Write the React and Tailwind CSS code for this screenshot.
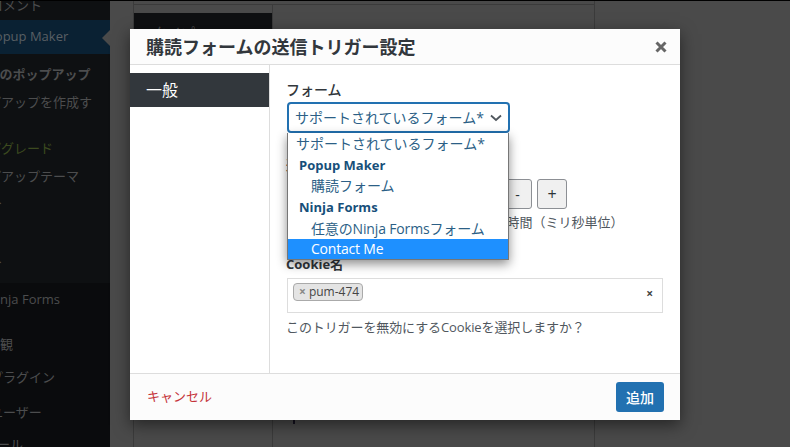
import React from "react";

function NavItem({ children, className = "", ml = "-ml-[38px]", h = "h-[28px]" }) {
  return (
    <div className={`${h} shrink-0 flex items-center whitespace-nowrap text-[13px] ${className}`}>
      <span className={ml}>{children}</span>
    </div>
  );
}

export default function App() {
  return (
    <div className="relative w-[790px] h-[447px] overflow-hidden bg-[#4a4a4a] font-['Open_Sans','Noto_Sans_CJK_JP',sans-serif] text-[#444444]">
      {/* page behind the overlay */}
      <div className="flex h-full">
        <aside className="w-[110px] h-full shrink-0 overflow-hidden bg-[#0e1012] text-[#4c4d4e] flex flex-col">
          <NavItem h="h-[20px]" ml="-ml-[10px] -mt-[8px]">コメント</NavItem>
          <div className="relative h-[34px] shrink-0 flex items-center bg-[#0a2133] whitespace-nowrap text-[13px] text-[#595f64]">
            <span className="-ml-[13px]">Popup Maker</span>
            <span className="absolute right-0 top-[10px] w-0 h-0 border-y-[8px] border-y-transparent border-r-[8px] border-r-[#4a4a4a]"></span>
          </div>
          <div className="h-[7px] shrink-0"></div>
          <NavItem className="font-bold">すべてのポップアップ</NavItem>
          <NavItem>ポップアップを作成す</NavItem>
          <div className="h-[18px] shrink-0"></div>
          <NavItem className="text-[#3c4a1f]">アップグレード</NavItem>
          <NavItem>ポップアップテーマ</NavItem>
          <NavItem h="h-[24px]" ml="-ml-[49px]">サポート</NavItem>
          <div className="h-[35px] shrink-0"></div>
          <NavItem h="h-[24px]" ml="-ml-[49px]">サポート</NavItem>
          <div className="h-[9px] shrink-0"></div>
          <div className="flex-1 bg-[#0a0b0d] flex flex-col">
            <div className="h-[3px] shrink-0"></div>
            <NavItem ml="-ml-[13px]">Ninja Forms</NavItem>
            <div className="h-[17px] shrink-0"></div>
            <NavItem ml="-ml-[13px]">外観</NavItem>
            <div className="h-[5px] shrink-0"></div>
            <NavItem ml="-ml-[10px]">プラグイン</NavItem>
            <div className="h-[7px] shrink-0"></div>
            <NavItem ml="-ml-[10px]">ユーザー</NavItem>
            <div className="h-[4px] shrink-0"></div>
            <NavItem ml="-ml-[16px]">ツール</NavItem>
          </div>
        </aside>
        <main className="flex-1 pl-[23px] pr-[195px]">
          <div className="relative border-x border-[#3b3b3b] h-full">
            <div className="h-[5px] border-b border-[#3b3b3b]"></div>
            <div className="w-[138px] h-[40px] mt-[8px] bg-[#0f1012] text-[#4a4a4a] text-[14px] pl-[19px] pt-[9px]">タイプ</div>
            <div className="absolute left-[138px] top-[5px] bottom-0 w-px bg-[#3b3b3b]"></div>
            <div className="absolute left-[159px] bottom-[23px] w-[2px] h-[4px] bg-[#15121f]"></div>
          </div>
        </main>
      </div>
      <div className="absolute left-0 right-0 top-0 h-px bg-black"></div>

      {/* modal */}
      <div className="absolute left-[130px] top-[29px] w-[550px] h-[391px] bg-white flex flex-col shadow-[0_5px_15px_rgba(0,0,0,0.5)]">
        <header className="relative h-[36px] shrink-0 bg-[#fcfcfc] border-b border-[#dddddd] pl-[16px] flex items-center">
          <h1 className="text-[18px] font-bold leading-none text-[#32373c]">購読フォームの送信トリガー設定</h1>
          <svg className="absolute right-[13px] top-[12px]" width="12" height="12" viewBox="0 0 12 12">
            <path d="M1.5 1.5 L10.5 10.5 M10.5 1.5 L1.5 10.5" stroke="#666666" strokeWidth="3" />
          </svg>
        </header>
        <div className="flex flex-1 min-h-0">
          <nav className="w-[140px] shrink-0 border-r border-[#dddddd] pt-[8px]">
            <div className="h-[34px] bg-[#32373c] text-white text-[16px] leading-[34px] pl-[16px] w-[139px]">一般</div>
          </nav>
          <section className="relative flex-1 pl-[16px] pt-[16px] text-[13px] text-[#50575e]">
            <label className="block text-[14px] leading-[18px] font-medium text-[#32373c]">フォーム</label>
            <div className="mt-[3px] ml-px w-[223px] h-[31px] border-2 border-[#2271b1] rounded-[4px] flex items-center justify-between pl-[6px] pr-[6px] text-[14px] text-[#2c5f86] bg-white">
              <span className="whitespace-nowrap">サポートされているフォーム*</span>
              <svg width="12" height="8" viewBox="0 0 12 8" className="shrink-0">
                <path d="M1 1.5 L6 6 L11 1.5" fill="none" stroke="#50575e" strokeWidth="1.8" />
              </svg>
            </div>
            <label className="block mt-[25px] h-[14px] text-[13px] leading-[14px] font-bold text-[#32373c]">遅延時間</label>
            <div className="mt-[7px] flex gap-[5px] pl-[217px]">
              <button className="w-[29px] h-[30px] border border-[#8c8f94] rounded-[3px] bg-[#f0f0f0] text-[#2c3338] text-[14px]">-</button>
              <button className="w-[30px] h-[30px] border border-[#8c8f94] rounded-[3px] bg-[#f0f0f0] text-[#2c3338] text-[16px]">+</button>
            </div>
            <p className="mt-[3px] whitespace-nowrap leading-[20px]">フォームの送信後に閉じるまでの遅延時間（ミリ秒単位）</p>
            <label className="block mt-[23px] leading-[18px] font-bold text-[#32373c]">Cookie名</label>
            <div className="mt-[5px] ml-px w-[376px] h-[35px] border border-[#dddddd] flex items-start justify-between pl-[5px] pr-[9px] pt-[4px] bg-white">
              <span className="h-[18px] flex items-center gap-[3px] rounded-[4px] border border-[#aaaaaa] bg-[#e4e4e4] pl-[5px] pr-[3px] text-[12px] text-[#444444]">
                <span className="text-[#888888] font-bold">×</span>pum-474
              </span>
              <span className="text-[12px] font-bold text-[#444444] leading-[22px]">×</span>
            </div>
            <p className="mt-[4px] whitespace-nowrap leading-[20px] tracking-[-0.1px]">このトリガーを無効にするCookieを選択しますか？</p>

            {/* open dropdown */}
            <ul className="absolute left-[17px] top-[68px] w-[222px] h-[127px] bg-white border border-[#767676] border-t-0 shadow-[0_4px_10px_rgba(0,0,0,0.45)] text-[14px] text-[#2c5f86] z-10">
              <li className="pl-[8px] h-[21px] leading-[21px]">サポートされているフォーム*</li>
              <li className="pl-[11px] h-[22px] leading-[22px] text-[13px] font-bold text-[#174f7a]">Popup Maker</li>
              <li className="pl-[23px] h-[20px] leading-[20px]">購読フォーム</li>
              <li className="pl-[11px] h-[22px] leading-[22px] text-[13px] font-bold text-[#174f7a]">Ninja Forms</li>
              <li className="pl-[23px] h-[21px] leading-[21px] tracking-[-0.15px] whitespace-nowrap">任意のNinja Formsフォーム</li>
              <li className="pl-[23px] h-[20px] leading-[20px] tracking-[-0.2px] bg-[#1e90ff] text-white">Contact Me</li>
            </ul>
          </section>
        </div>
        <footer className="h-[47px] shrink-0 bg-[#fcfcfc] border-t border-[#dddddd] flex items-center justify-between pl-[17px] pr-[16px]">
          <a className="text-[13px] text-[#c5333a]">キャンセル</a>
          <button className="w-[48px] h-[30px] rounded-[3px] bg-[#2271b1] text-white text-[14px] font-medium">追加</button>
        </footer>
      </div>
    </div>
  );
}
